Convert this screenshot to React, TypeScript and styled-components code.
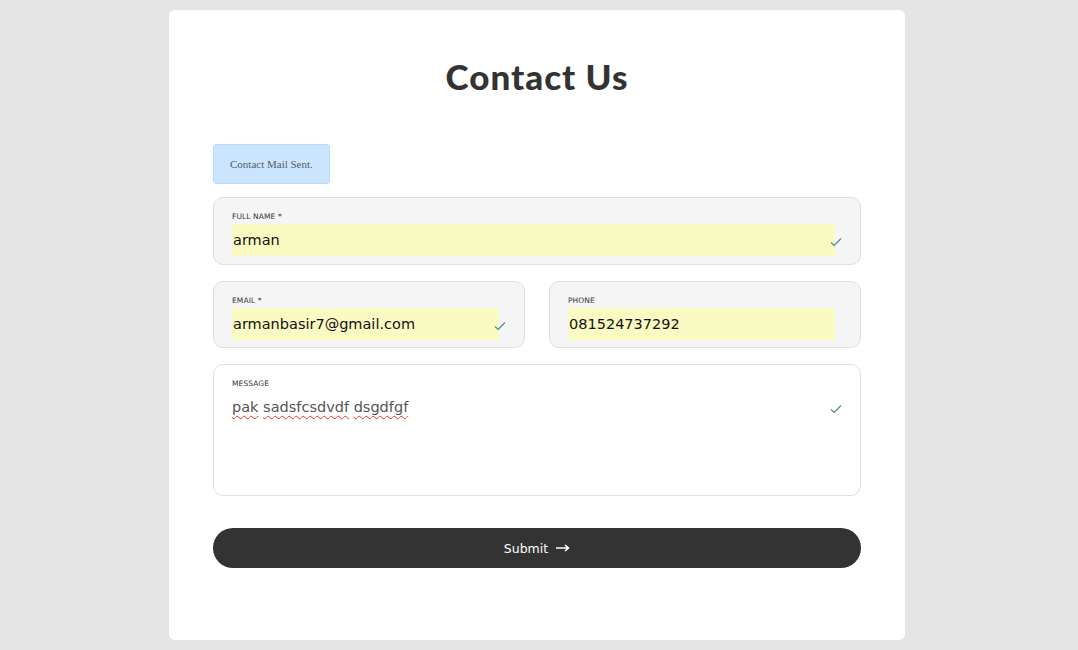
import React from "react";
import styled, { createGlobalStyle } from "styled-components";

const Global = createGlobalStyle`
  html, body {
    margin: 0;
    padding: 0;
    background: #e5e5e5;
  }
  body {
    font-family: "DejaVu Sans", "Open Sans", sans-serif;
  }
`;

const Page = styled.div`
  display: flex;
  justify-content: center;
  padding: 10px 4px 0 0;
  min-height: 650px;
  box-sizing: border-box;
`;

const Card = styled.div`
  width: 736px;
  height: 630px;
  background: #ffffff;
  border-radius: 6px;
  padding: 44px 44px 0;
  box-sizing: border-box;
`;

const Title = styled.h1`
  margin: -1px 0 45px;
  text-align: center;
  font-family: Lato, "DejaVu Sans", sans-serif;
  font-weight: 900;
  font-size: 35px;
  line-height: 46px;
  color: #333333;
  letter-spacing: 1px;
`;

const Alert = styled.div`
  display: inline-flex;
  align-items: center;
  height: 40px;
  padding: 0 16px;
  box-sizing: border-box;
  background: #cce5ff;
  border: 1px solid #b8daff;
  border-radius: 3px;
  font-family: "Liberation Serif", serif;
  font-size: 11px;
  color: #555e66;
  margin-bottom: 13px;
`;

const Form = styled.form`
  display: flex;
  flex-direction: column;
  gap: 16px;
`;

const Row = styled.div`
  display: grid;
  grid-template-columns: 1fr 1fr;
  gap: 24px;
`;

const Field = styled.div<{ $white?: boolean; $tall?: boolean }>`
  position: relative;
  box-sizing: border-box;
  height: ${(p) => (p.$tall ? "132px" : "67.5px")};
  padding: 14px 25px 0 18px;
  background: ${(p) => (p.$white ? "#ffffff" : "#f5f5f5")};
  border: 1px solid #e0e0e0;
  border-radius: 10px;
`;

const Label = styled.label`
  display: block;
  font-size: 7.5px;
  font-weight: 500;
  color: #333333;
  letter-spacing: 0.1px;
  text-transform: uppercase;
  line-height: 10px;
  margin-bottom: 2px;
`;

const Input = styled.div`
  height: 32px;
  display: flex;
  align-items: center;
  background: #fafbc2;
  font-size: 14.5px;
  color: #111111;
  padding-left: 1px;
`;

const MessageText = styled.div`
  padding-top: 6px;
  font-size: 14.5px;
  color: #555555;
  line-height: 20px;
`;

const Squiggle = styled.span`
  text-decoration: underline wavy #e0322e;
  text-decoration-thickness: 1px;
  text-underline-offset: 3px;
`;

const Check = styled.span<{ $top: number }>`
  position: absolute;
  right: 18px;
  top: ${(p) => p.$top}px;
  width: 12px;
  height: 10px;
  display: flex;
`;

const SubmitButton = styled.button`
  margin-top: 16px;
  height: 40px;
  border: none;
  border-radius: 20px;
  background: #333333;
  color: #ffffff;
  font-family: "DejaVu Sans", sans-serif;
  font-size: 12.5px;
  display: flex;
  align-items: center;
  justify-content: center;
  gap: 8px;
  cursor: pointer;
`;

const Tick = ({ top }: { top: number }) => (
  <Check $top={top}>
    <svg width="12" height="10" viewBox="0 0 12 10">
      <path d="M1 5.5 L4.2 8.5 L11 1.5" fill="none" stroke="#4f8a8b" strokeWidth="1.2" />
    </svg>
  </Check>
);

export default function App() {
  return (
    <>
      <Global />
      <Page>
        <Card>
          <Title>Contact Us</Title>
          <Alert>Contact Mail Sent.</Alert>
          <Form onSubmit={(e) => e.preventDefault()}>
            <Field>
              <Label>Full Name *</Label>
              <Input>arman</Input>
              <Tick top={39} />
            </Field>
            <Row>
              <Field>
                <Label>Email *</Label>
                <Input>armanbasir7@gmail.com</Input>
                <Tick top={39} />
              </Field>
              <Field>
                <Label>Phone</Label>
                <Input>081524737292</Input>
              </Field>
            </Row>
            <Field $white $tall>
              <Label>Message</Label>
              <MessageText>
                <Squiggle>pak</Squiggle> <Squiggle>sadsfcsdvdf</Squiggle>{" "}
                <Squiggle>dsgdfgf</Squiggle>
              </MessageText>
              <Tick top={39} />
            </Field>
            <SubmitButton type="submit">
              Submit
              <svg width="14" height="8" viewBox="0 0 14 8">
                <path d="M0 4 H12 M9 1 L12.5 4 L9 7" fill="none" stroke="#fff" strokeWidth="1.6" />
              </svg>
            </SubmitButton>
          </Form>
        </Card>
      </Page>
    </>
  );
}
